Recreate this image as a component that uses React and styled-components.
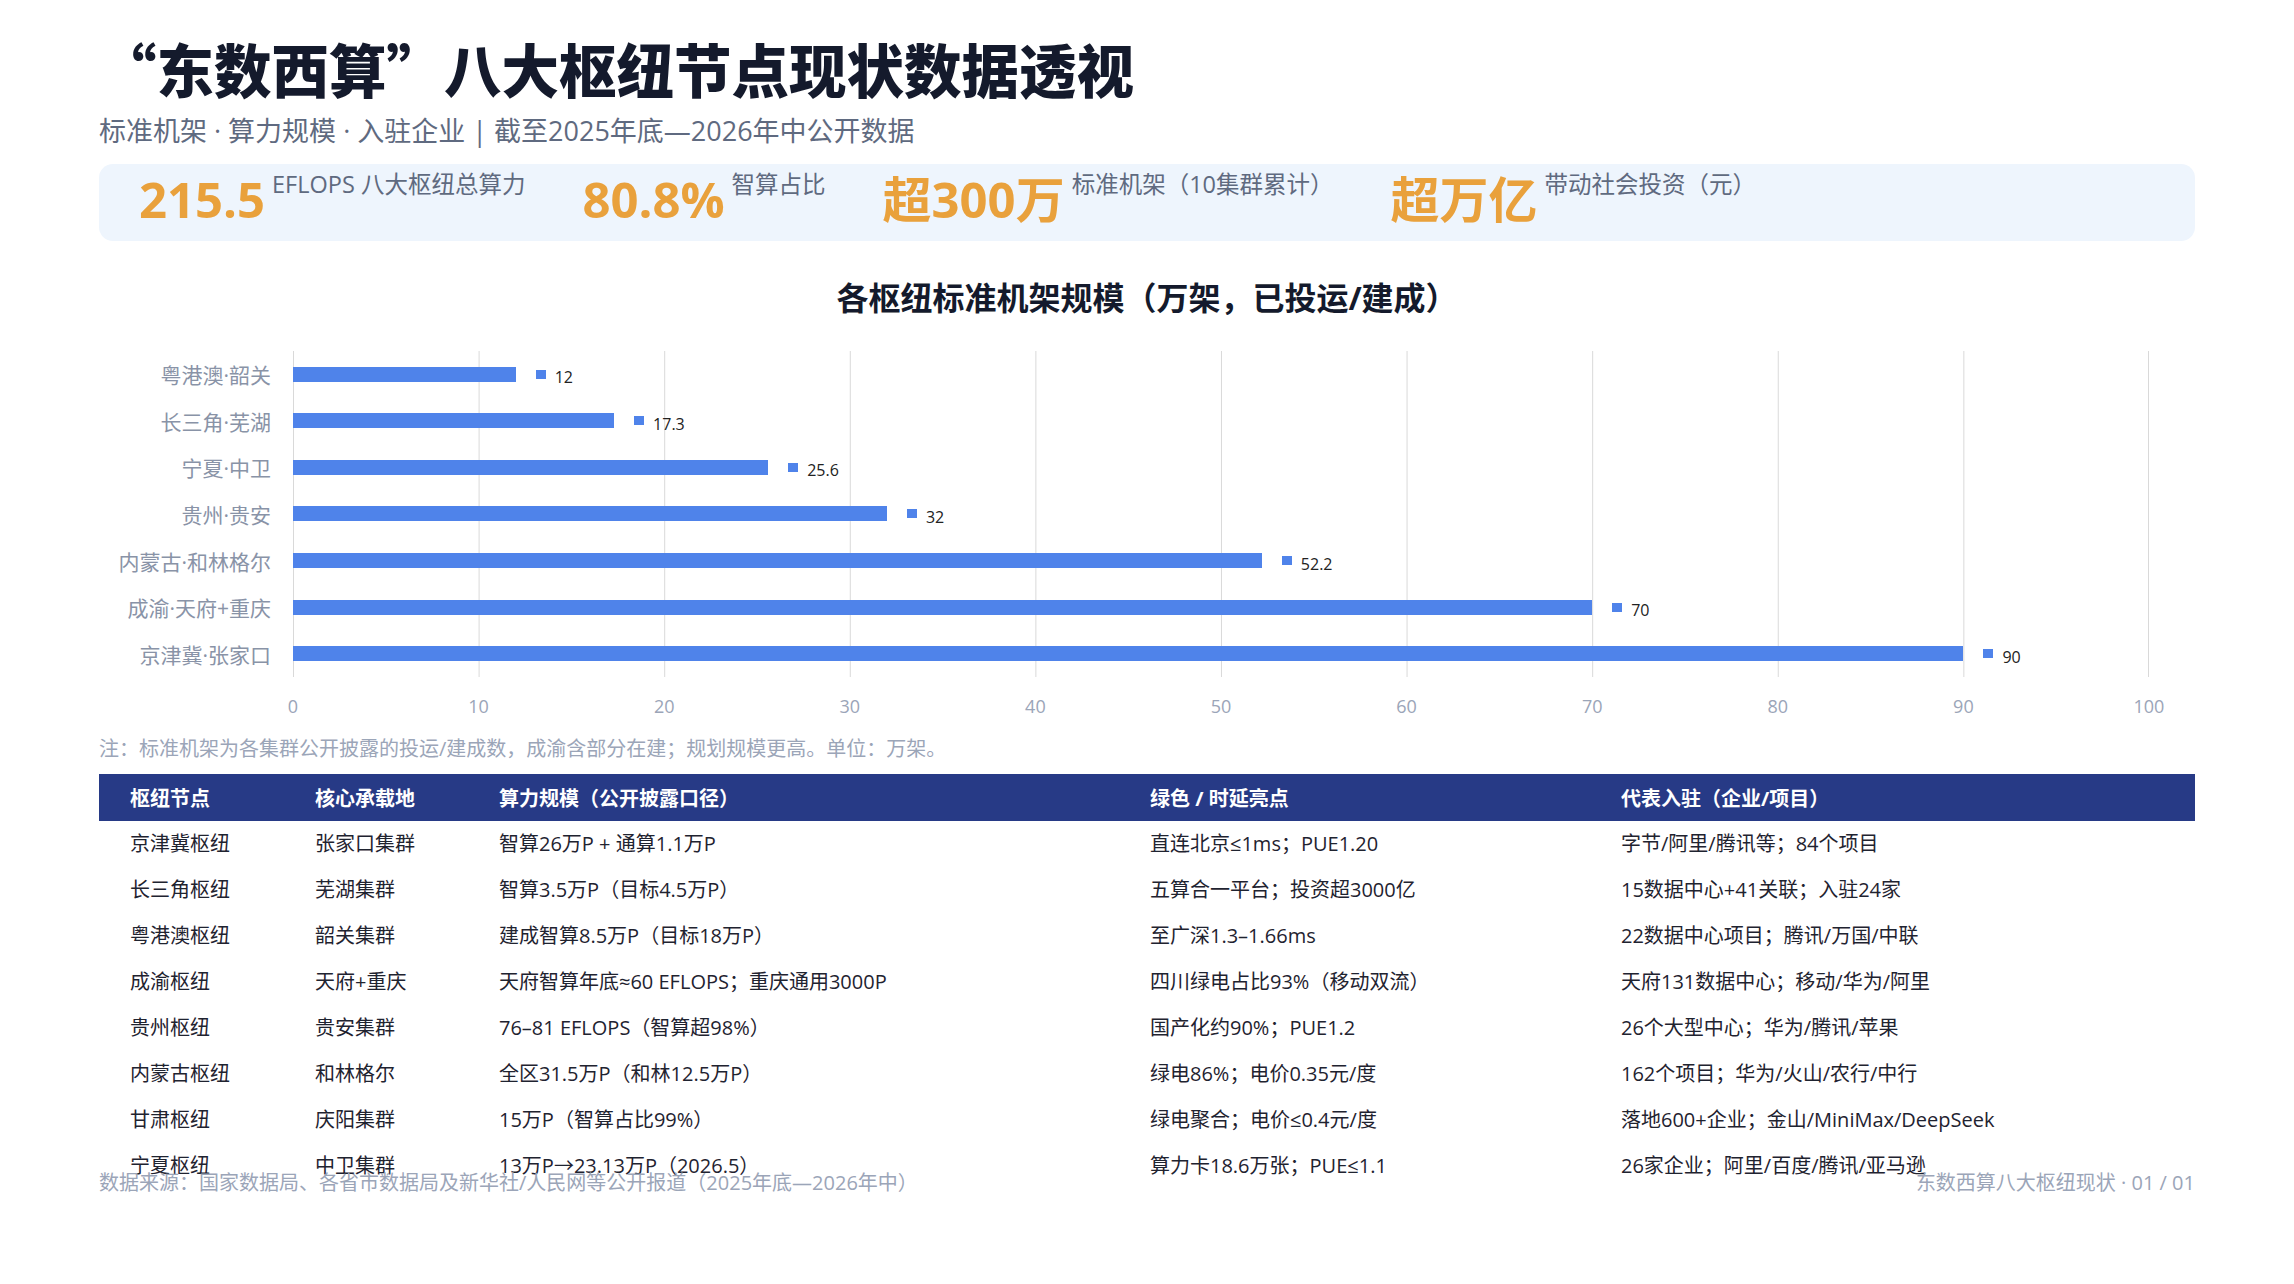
import React from 'react';
import styled, { createGlobalStyle } from 'styled-components';

const GlobalStyle = createGlobalStyle`
  html, body {
    margin: 0;
    padding: 0;
    background: #ffffff;
  }
  body {
    font-family: "Open Sans", "Noto Sans CJK SC", sans-serif;
    color: #1f2330;
  }
`;

const kpis = [
  { value: '215.5', label: 'EFLOPS 八大枢纽总算力' },
  { value: '80.8%', label: '智算占比' },
  { value: '超300万', label: '标准机架（10集群累计）' },
  { value: '超万亿', label: '带动社会投资（元）' },
];

const racks = [
  { name: '粤港澳·韶关', value: 12 },
  { name: '长三角·芜湖', value: 17.3 },
  { name: '宁夏·中卫', value: 25.6 },
  { name: '贵州·贵安', value: 32 },
  { name: '内蒙古·和林格尔', value: 52.2 },
  { name: '成渝·天府+重庆', value: 70 },
  { name: '京津冀·张家口', value: 90 },
];

const ticks = [0, 10, 20, 30, 40, 50, 60, 70, 80, 90, 100];

const columns = [
  { title: '枢纽节点', width: 185 },
  { title: '核心承载地', width: 184 },
  { title: '算力规模（公开披露口径）', width: 651 },
  { title: '绿色 / 时延亮点', width: 471 },
  { title: '代表入驻（企业/项目）', width: 'auto' },
];

const hubs = [
  ['京津冀枢纽', '张家口集群', '智算26万P + 通算1.1万P', '直连北京≤1ms；PUE1.20', '字节/阿里/腾讯等；84个项目'],
  ['长三角枢纽', '芜湖集群', '智算3.5万P（目标4.5万P）', '五算合一平台；投资超3000亿', '15数据中心+41关联；入驻24家'],
  ['粤港澳枢纽', '韶关集群', '建成智算8.5万P（目标18万P）', '至广深1.3–1.66ms', '22数据中心项目；腾讯/万国/中联'],
  ['成渝枢纽', '天府+重庆', '天府智算年底≈60 EFLOPS；重庆通用3000P', '四川绿电占比93%（移动双流）', '天府131数据中心；移动/华为/阿里'],
  ['贵州枢纽', '贵安集群', '76–81 EFLOPS（智算超98%）', '国产化约90%；PUE1.2', '26个大型中心；华为/腾讯/苹果'],
  ['内蒙古枢纽', '和林格尔', '全区31.5万P（和林12.5万P）', '绿电86%；电价0.35元/度', '162个项目；华为/火山/农行/中行'],
  ['甘肃枢纽', '庆阳集群', '15万P（智算占比99%）', '绿电聚合；电价≤0.4元/度', '落地600+企业；金山/MiniMax/DeepSeek'],
  ['宁夏枢纽', '中卫集群', '13万P→23.13万P（2026.5）', '算力卡18.6万张；PUE≤1.1', '26家企业；阿里/百度/腾讯/亚马逊'],
];

const Slide = styled.div`
  width: 2294px;
  height: 1284px;
  box-sizing: border-box;
  padding: 34px 99px 87px;
  display: flex;
  flex-direction: column;
`;

const Main = styled.main`
  flex: 1;
  min-height: 0;
`;

const Title = styled.h1`
  margin: 0;
  font-family: "Noto Sans CJK SC", sans-serif;
  font-size: 57.5px;
  line-height: 68px;
  font-weight: 900;
  color: #141a2c;
`;

const Subtitle = styled.p`
  margin: 12px 0 0;
  font-size: 27px;
  line-height: 34px;
  color: #5f6a80;
`;

const KpiBand = styled.section`
  margin-top: 16px;
  height: 77px;
  box-sizing: border-box;
  padding: 5px 40px 0;
  background: #eef5fd;
  border-radius: 14px;
  display: flex;
  align-items: flex-start;
  gap: 57px;
`;

const Kpi = styled.div`
  display: flex;
  align-items: flex-start;
  gap: 7px;
`;

const KpiValue = styled.span`
  font-size: 49px;
  line-height: 60px;
  font-weight: 700;
  color: #e9a13c;
`;

const KpiLabel = styled.span`
  font-size: 23.5px;
  line-height: 30px;
  color: #5f6a80;
`;

const ChartTitle = styled.h2`
  margin: 37px 0 0;
  font-size: 32px;
  line-height: 40px;
  font-weight: 700;
  text-align: center;
  color: #141a2c;
`;

const ChartGrid = styled.div`
  margin-top: 33px;
  padding-right: 46px;
  display: grid;
  grid-template-columns: 172px 1fr;
  column-gap: 22px;
`;

const Categories = styled.div`
  height: 326px;
  display: grid;
  grid-template-rows: repeat(7, 1fr);
`;

const Category = styled.div`
  display: flex;
  align-items: center;
  justify-content: flex-end;
  font-size: 21px;
  color: #8993a7;
  white-space: nowrap;
`;

const Plot = styled.div`
  height: 326px;
  display: grid;
  grid-template-rows: repeat(7, 1fr);
  background-image:
    linear-gradient(to left, #d9d9d9 1px, transparent 1px),
    linear-gradient(to right, #d9d9d9 1px, transparent 1px);
  background-size: 100% 100%, 10% 100%;
  background-repeat: no-repeat, repeat-x;
`;

const BarRow = styled.div`
  display: flex;
  align-items: center;
`;

const Bar = styled.div`
  flex-shrink: 0;
  height: 15px;
  background: #4f83ea;
`;

const Marker = styled.span`
  flex-shrink: 0;
  width: 10px;
  height: 9px;
  margin: 0 9px 0 20px;
  background: #4f83ea;
`;

const BarValue = styled.span`
  font-size: 16px;
  line-height: 20px;
  margin-top: 6px;
  color: #222222;
`;

const Ticks = styled.div`
  grid-column: 2;
  margin: 16px 0 0 -5%;
  width: 110%;
  display: grid;
  grid-template-columns: repeat(11, 1fr);
`;

const Tick = styled.span`
  text-align: center;
  font-size: 18px;
  line-height: 26px;
  color: #9ba5b8;
`;

const Note = styled.p`
  margin: 16px 0 0;
  font-size: 20px;
  line-height: 28px;
  color: #9ba5b8;
`;

const Table = styled.table`
  margin-top: 11px;
  width: 100%;
  border-collapse: collapse;
  table-layout: fixed;
`;

const HeadCell = styled.th`
  width: ${(p) => (typeof p.$w === 'number' ? `${p.$w}px` : p.$w)};
  height: 47px;
  padding: 0 0 0 31px;
  box-sizing: border-box;
  background: #273a86;
  color: #ffffff;
  font-size: 20px;
  font-weight: 700;
  text-align: left;
  white-space: nowrap;
`;

const Cell = styled.td`
  box-sizing: border-box;
  height: 46px;
  padding: 0 0 3px 31px;
  font-size: 20px;
  color: #1f2330;
  white-space: nowrap;
  vertical-align: middle;
`;

const Footer = styled.footer`
  display: flex;
  justify-content: space-between;
  font-size: 20px;
  line-height: 28px;
  color: #9ba5b8;
`;

export default function App() {
  return (
    <>
      <GlobalStyle />
      <Slide lang="zh-CN">
        <Main>
          <Title>“东数西算”八大枢纽节点现状数据透视</Title>
          <Subtitle>标准机架 · 算力规模 · 入驻企业 | 截至2025年底—2026年中公开数据</Subtitle>

          <KpiBand>
            {kpis.map((k) => (
              <Kpi key={k.label}>
                <KpiValue>{k.value}</KpiValue>
                <KpiLabel>{k.label}</KpiLabel>
              </Kpi>
            ))}
          </KpiBand>

          <ChartTitle>各枢纽标准机架规模（万架，已投运/建成）</ChartTitle>
          <ChartGrid>
            <Categories>
              {racks.map((r) => (
                <Category key={r.name}>{r.name}</Category>
              ))}
            </Categories>
            <Plot>
              {racks.map((r) => (
                <BarRow key={r.name}>
                  <Bar style={{ width: `${r.value}%` }} />
                  <Marker />
                  <BarValue>{r.value}</BarValue>
                </BarRow>
              ))}
            </Plot>
            <Ticks>
              {ticks.map((t) => (
                <Tick key={t}>{t}</Tick>
              ))}
            </Ticks>
          </ChartGrid>

          <Note>注：标准机架为各集群公开披露的投运/建成数，成渝含部分在建；规划规模更高。单位：万架。</Note>

          <Table>
            <thead>
              <tr>
                {columns.map((c) => (
                  <HeadCell key={c.title} $w={c.width}>{c.title}</HeadCell>
                ))}
              </tr>
            </thead>
            <tbody>
              {hubs.map((row) => (
                <tr key={row[0]}>
                  {row.map((cell, i) => (
                    <Cell key={i}>{cell}</Cell>
                  ))}
                </tr>
              ))}
            </tbody>
          </Table>
        </Main>

        <Footer>
          <span>数据来源：国家数据局、各省市数据局及新华社/人民网等公开报道（2025年底—2026年中）</span>
          <span>东数西算八大枢纽现状 · 01 / 01</span>
        </Footer>
      </Slide>
    </>
  );
}
